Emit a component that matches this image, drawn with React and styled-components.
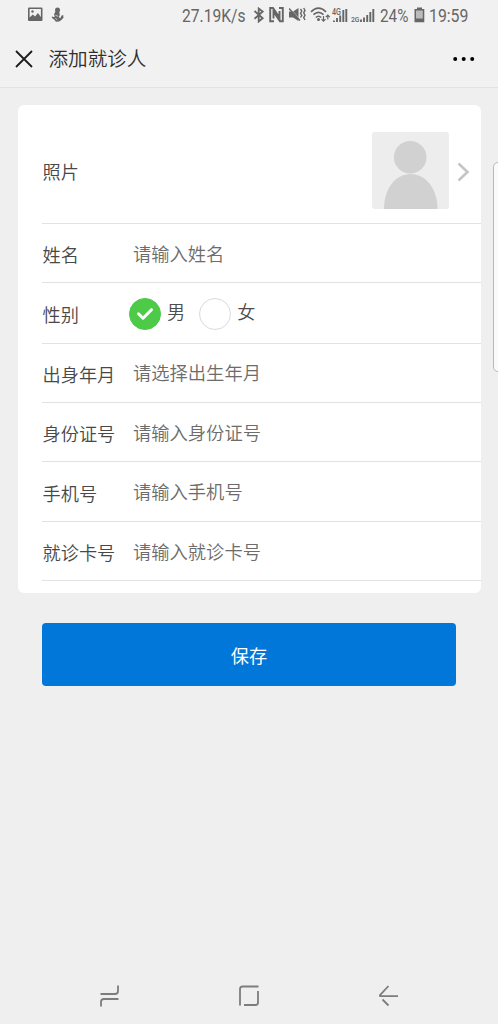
import React, { useState } from "react";
import styled, { createGlobalStyle } from "styled-components";

const GlobalStyle = createGlobalStyle`
  * {
    box-sizing: border-box;
  }
  body {
    margin: 0;
    background-color: #efefef;
    font-family: "Noto Sans CJK SC", sans-serif;
    font-weight: 350;
    color: #4d4d4d;
  }
`;

const Screen = styled.div`
  position: relative;
  display: flex;
  flex-direction: column;
  width: 498px;
  height: 1024px;
  overflow: hidden;
  background-color: #efefef;
`;

const StatusBar = styled.div`
  display: flex;
  align-items: flex-start;
  flex: none;
  height: 30px;
  padding: 6px 0 0 27px;
  background-color: #f1f1f1;
  color: #666;
`;

const StatusIcon = styled.svg`
  display: block;
  flex: none;
  width: ${({ $w }) => $w}px;
  height: 17px;
  margin-left: ${({ $gap }) => $gap || 0}px;
`;

const StatusText = styled.span`
  flex: none;
  width: ${({ $w }) => $w}px;
  margin-left: ${({ $gap }) => $gap}px;
  font-family: Roboto, sans-serif;
  font-size: 18.4px;
  font-weight: 400;
  line-height: 19px;
  white-space: nowrap;
  transform: scaleX(${({ $squeeze }) => $squeeze});
  transform-origin: left;
`;

const TitleBar = styled.header`
  display: flex;
  align-items: center;
  flex: none;
  height: 58px;
  padding: 0 23px 0 15px;
  background-color: #f1f1f1;
  border-bottom: 1px solid #e2e2e2;
`;

const IconButton = styled.button`
  display: flex;
  padding: 0;
  border: none;
  background: none;
  cursor: pointer;
`;

const Title = styled.h1`
  flex: 1;
  margin: 0 0 1px 15.500px;
  font-size: 19.6px;
  font-weight: 350;
  line-height: 28px;
  color: #2e2e2e;
`;

const Card = styled.section`
  flex: none;
  width: 463px;
  height: 488px;
  margin: 17.400px 0 0 18px;
  padding-left: 24px;
  border-radius: 6px;
  background-color: #fff;
`;

const Row = styled.div`
  display: flex;
  align-items: center;
  height: ${({ $h }) => $h || 59.4}px;
  border-bottom: 1px solid #e2e2e2;
`;

const PhotoRow = styled(Row)`
  height: 118.500px;
  padding-top: 13px;
`;

const Label = styled.span`
  width: 91px;
  padding: ${({ $drop }) => $drop || 0}px 0 0 0.500px;
  font-size: 18.2px;
  line-height: 26px;
  color: #484848;
`;

const Input = styled.input`
  width: 300px;
  height: 40px;
  margin-bottom: 1px;
  padding: 0;
  border: none;
  outline: none;
  background: none;
  font-family: inherit;
  font-size: 18.3px;
  font-weight: inherit;
  color: #4d4d4d;

  &::placeholder {
    color: #6c6c6c;
    opacity: 1;
  }
`;

const Photo = styled.svg`
  display: block;
  margin-left: auto;
  border-radius: 3px;
  background-color: #ededed;
`;

const Chevron = styled.svg`
  display: block;
  margin: 2px 11px 0 8px;
`;

const Option = styled.label`
  display: flex;
  align-items: center;
  margin: 0 14px 0 -4px;
  cursor: pointer;

  & + & {
    margin-left: 0;
  }
`;

const Radio = styled.span`
  display: flex;
  align-items: center;
  justify-content: center;
  width: 32px;
  height: 32px;
  margin-top: 2px;
  border-radius: 50%;
  border: 1px solid ${({ $checked }) => ($checked ? "#4dca48" : "#dadada")};
  background-color: ${({ $checked }) => ($checked ? "#4dca48" : "#fff")};
`;

const HiddenRadio = styled.input`
  display: none;
`;

const OptionText = styled.span`
  margin-left: 6px;
  padding-bottom: 4px;
  font-size: 18.2px;
  line-height: 26px;
`;

const SaveButton = styled.button`
  flex: none;
  width: 414px;
  height: 63px;
  margin: 30px 0 0 42px;
  padding: 0;
  border: none;
  border-radius: 4px;
  background-color: #0077d9;
  color: #fff;
  font-family: inherit;
  font-size: 18.2px;
  font-weight: 400;
  cursor: pointer;
`;

const NavBar = styled.nav`
  display: flex;
  align-items: center;
  justify-content: space-between;
  flex: none;
  height: 56px;
  margin-top: auto;
  padding: 0 98px;
`;

// edge panel handle, sits over the right side of the screen
const EdgeHandle = styled.div`
  position: absolute;
  top: 162px;
  right: -8px;
  width: 13px;
  height: 210px;
  border: 1px solid #b9b9b9;
  border-radius: 5px;
  background-color: #fafafa;
`;

const fields = [
  { name: "birth", label: "出身年月", placeholder: "请选择出生年月" },
  { name: "idCard", label: "身份证号", placeholder: "请输入身份证号" },
  { name: "phone", label: "手机号", placeholder: "请输入手机号" },
  { name: "visitCard", label: "就诊卡号", placeholder: "请输入就诊卡号" },
];

const genders = ["男", "女"];

const Status = () => (
  <StatusBar>
    <StatusIcon $w={16} viewBox="0 0 16 17">
      <path
        fill="#666"
        fillRule="evenodd"
        d="M2 1.500h12.500a1 1 0 0 1 1 1v11.500a1 1 0 0 1-1 1H2a1 1 0 0 1-1-1V2.500a1 1 0 0 1 1-1zM2.600 3v8.500l3.200-3 2.300 2 2.800-3.500 3 4V3z"
      />
      <circle cx="5.500" cy="5.500" r="1.200" fill="#666" />
    </StatusIcon>
    <StatusIcon $w={13} $gap={8} viewBox="0 0 13 17">
      <g fill="#666">
        <circle cx="6.500" cy="4" r="2.500" />
        <path d="M4.200 5.800l4-.2.600 3.400-1 2 1.500 1.200 1.300-2.700 1.800-.6-.3 1.500.8.700-2.200 2.600-2.500 1.900-3.300.2-1.500-2-2.400-1.700-.3-1.600 2 .6 1.200-.6-.9-2.100z" />
      </g>
      <path stroke="#f1f1f1" strokeWidth=".7" fill="none" d="M4.500 9.300l2.600 1M4.300 12.300l2 1.500" />
    </StatusIcon>

    <StatusText $w={64} $gap={117.5} $squeeze={0.85}>27.19K/s</StatusText>
    <StatusIcon $w={12} $gap={7.5} viewBox="0 0 12 17">
      <path fill="none" stroke="#666" strokeWidth="1.800" d="M1.500 5l8.200 7.200-4 3.300V2.500l4 3L1.500 12.700" />
    </StatusIcon>
    <StatusIcon $w={15} $gap={4} viewBox="0 0 15 17">
      <path fill="none" stroke="#666" strokeWidth="1.900" d="M5 15.200H1.200V2H4l6.500 9.500V5M10 2h3.800v13.200H11L4.500 5.800V12.500" />
      <path stroke="#666" strokeWidth="1" d="M5 4.500l6 9" />
    </StatusIcon>
    <StatusIcon $w={17} $gap={5} viewBox="0 0 17 17">
      <path fill="#666" d="M0 5.500h4L9.500 2v13L4 11.500H0z" />
      <path stroke="#f1f1f1" strokeWidth=".6" d="M1.200 2.200l9.500 10.800" />
      <path stroke="#666" strokeWidth="1.400" d="M0 2.500l11 12" />
      <path
        fill="none"
        stroke="#666"
        strokeWidth="1.400"
        d="M11.500 3l1.300 2-1.300 2.200 1.300 2.200-1.300 2.100M14.700 2l1.300 2.400-1.300 2.400L16 9.200l-1.300 2.400 1.300 2.400"
      />
    </StatusIcon>
    <StatusIcon $w={20} $gap={4} viewBox="0 0 20 17">
      <g fill="none" stroke="#666" strokeWidth="1.600">
        <path d="M1 5.800q7.500-7.200 15 0" />
        <path d="M3.500 8.700q5-4.800 10 0" />
        <path d="M5.800 11.500q2.700-2.500 5.400 0" />
      </g>
      <path fill="none" stroke="#666" strokeWidth="1.200" d="M13.500 10v5.500M11.500 13.200l2 2 2-2M17.800 13.500V9M15.800 11.200l2-2 2 2" />
      <circle cx="8.500" cy="13.500" r="1.500" fill="#666" />
    </StatusIcon>
    <StatusIcon $w={16} $gap={2} viewBox="0 0 16 17">
      <text x="0" y="8.500" fontFamily="Roboto, sans-serif" fontSize="8.500" fontWeight="500" fill="#666" textLength="9" lengthAdjust="spacingAndGlyphs">
        4G
      </text>
      <path stroke="#666" strokeWidth="1.900" d="M2 16V14.500M5 16V12M8.200 16V9.500M11.300 16V4M14.300 16V3" />
    </StatusIcon>
    <StatusIcon $w={24} $gap={3} viewBox="0 0 24 17">
      <text x="0" y="15.800" fontFamily="Roboto, sans-serif" fontSize="6.800" fontWeight="500" fill="#666" textLength="8.500" lengthAdjust="spacingAndGlyphs">
        2G
      </text>
      <path stroke="#666" strokeWidth="1.900" d="M10 16V13.500M13 16V11.500M16.200 16V9M19.300 16V6M22.300 16V3" />
    </StatusIcon>
    <StatusText $w={30} $gap={4.5} $squeeze={0.83}>24%</StatusText>
    <StatusIcon $w={11} $gap={4} viewBox="0 0 11 17">
      <path fill="#666" d="M3 1.500h5V3h2.300v13.300H.5V3H3z" />
      <path fill="#bbb" d="M2 4.500h6.800v8H2z" />
    </StatusIcon>
    <StatusText $w={40} $gap={4.5} $squeeze={0.86}>19:59</StatusText>
  </StatusBar>
);

const App = () => {
  const [gender, setGender] = useState("男");
  const [values, setValues] = useState({});

  const handleChange = (e) => {
    setValues({ ...values, [e.target.name]: e.target.value });
  };

  return (
    <>
      <GlobalStyle />
      <Screen>
        <Status />
        <TitleBar>
          <IconButton>
            <svg width="18" height="18" viewBox="0 0 18 18">
              <path stroke="#1c1c1c" strokeWidth="1.800" d="M1 1l16 16M17 1L1 17" />
            </svg>
          </IconButton>
          <Title>添加就诊人</Title>
          <IconButton>
            <svg width="22" height="6" viewBox="0 0 22 6">
              <circle cx="2.200" cy="3" r="2" />
              <circle cx="10.700" cy="3" r="2" />
              <circle cx="19.200" cy="3" r="2" />
            </svg>
          </IconButton>
        </TitleBar>

        <Card>
          <PhotoRow>
            <Label>照片</Label>
            <Photo width="77" height="77" viewBox="0 0 77 77">
              <circle cx="38.200" cy="25.200" r="16.300" fill="#d1d1d1" />
              <path fill="#d1d1d1" d="M12 77C12 57 23 42 38.500 42S65.500 57 65.500 77z" />
            </Photo>
            <Chevron width="13" height="20" viewBox="0 0 13 20">
              <path fill="none" stroke="#c4c4c4" strokeWidth="2.500" d="M1.500 1.500l9 8.500-9 8.500" />
            </Chevron>
          </PhotoRow>
          <Row>
            <Label $drop={2}>姓名</Label>
            <Input name="name" value={values.name || ""} onChange={handleChange} placeholder="请输入姓名" />
          </Row>
          <Row $h={60.4}>
            <Label $drop={2}>性别</Label>
            {genders.map((item) => (
              <Option key={item}>
                <HiddenRadio type="radio" name="gender" checked={gender === item} onChange={() => setGender(item)} />
                <Radio $checked={gender === item}>
                  {gender === item && (
                    <svg width="18" height="14" viewBox="0 0 18 14">
                      <path fill="none" stroke="#fff" strokeWidth="3" strokeLinecap="round" strokeLinejoin="round" d="M2.500 6.800l4.500 4.400 8.500-8.500" />
                    </svg>
                  )}
                </Radio>
                <OptionText>{item}</OptionText>
              </Option>
            ))}
          </Row>
          {fields.map((f) => (
            <Row key={f.name}>
              <Label $drop={2}>{f.label}</Label>
              <Input name={f.name} value={values[f.name] || ""} onChange={handleChange} placeholder={f.placeholder} />
            </Row>
          ))}
        </Card>

        <SaveButton>保存</SaveButton>

        <NavBar>
          <svg width="22" height="24" viewBox="0 0 22 24">
            <path fill="none" stroke="#7d7d7d" strokeWidth="1.800" d="M2.500 10H17q3 0 3-3V1.500M3 22.500V18q0-3 3-3H20.500" />
          </svg>
          <svg width="22" height="22" viewBox="0 0 22 22">
            <path fill="none" stroke="#7d7d7d" strokeWidth="1.800" d="M2 20.500V4q0-2.500 2.500-2.500H20.500M20 6v11.500q0 2.500-2.500 2.500H6" />
          </svg>
          <svg width="22" height="22" viewBox="0 0 22 22">
            <path fill="none" stroke="#7d7d7d" strokeWidth="1.800" strokeLinejoin="round" d="M10.500 1L2 10.200q-.5 1 .8 1H20M4.500 14.500l6 6" />
          </svg>
        </NavBar>

        <EdgeHandle />
      </Screen>
    </>
  );
};

export default App;
